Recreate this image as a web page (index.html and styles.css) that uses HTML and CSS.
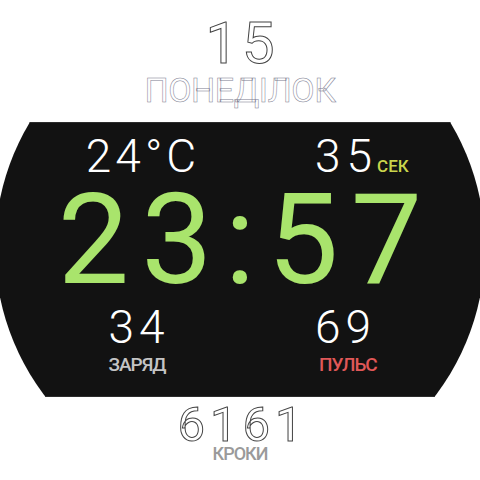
FILE: index.html
```html
<!DOCTYPE html>
<html lang="uk">
<head>
<meta charset="utf-8">
<link rel="stylesheet" href="styles.css">
</head>
<body>
<div class="face">
  <div class="day">15</div>
  <div class="weekday">ПОНЕДІЛОК</div>
  <div class="panel">
    <div class="row row-top">
      <div class="cell left">24°C</div>
      <div class="cell right">35<span class="sec">СЕК</span></div>
    </div>
    <div class="time">23:57</div>
    <div class="row row-bottom">
      <div class="cell left">34</div>
      <div class="cell right">69</div>
    </div>
    <div class="row row-labels">
      <div class="cell left label battery">ЗАРЯД</div>
      <div class="cell right label pulse">ПУЛЬС</div>
    </div>
  </div>
  <div class="steps">6161</div>
  <div class="steps-label">КРОКИ</div>
</div>
</body>
</html>
```

FILE: styles.css
```css
html, body {
  margin: 0;
  padding: 0;
  background: #ffffff;
}

.face {
  width: 480px;
  height: 480px;
  overflow: hidden;
  font-family: Roboto, "Noto Sans", sans-serif;
  display: flex;
  flex-direction: column;
}

.day {
  padding-top: 8px;
  height: 70px;
  line-height: 70px;
  font-size: 58px;
  font-weight: 400;
  text-align: center;
  letter-spacing: 4px;
  padding-left: 4px;
  color: #ffffff;
  -webkit-text-stroke: 1px #444444;
}

.weekday {
  height: 25px;
  line-height: 25px;
  font-size: 34px;
  font-weight: 400;
  text-align: center;
  letter-spacing: -0.5px;
  color: #ffffff;
  -webkit-text-stroke: 0.5px #7c7c90;
}

.panel {
  margin-top: 19px;
  height: 275px;
  background: #121212;
  border-top: 1px solid #2c2c2c;
  border-bottom: 1px solid #2c2c2c;
  box-sizing: border-box;
  clip-path: circle(245px at 240px 126px);
  display: flex;
  flex-direction: column;
  color: #ffffff;
}

.row {
  display: grid;
  grid-template-columns: 206px 1fr;
  padding-left: 36px;
}

.cell {
  font-size: 46px;
  font-weight: 300;
  letter-spacing: 5px;
}

.cell.left {
  text-align: center;
}

.cell.right {
  text-align: left;
  padding-left: 73px;
}

.row-top {
  height: 67px;
  line-height: 67px;
}

.row-top .cell.left {
  letter-spacing: 4px;
  padding-left: 8px;
}

.row-top .cell.right {
  letter-spacing: 6px;
}

.sec {
  font-size: 17px;
  font-weight: 500;
  letter-spacing: 0;
  color: #c9d44c;
  margin-left: -1px;
}

.time {
  height: 99px;
  line-height: 99px;
  font-size: 127px;
  font-weight: 400;
  color: #a9e46c;
  text-align: center;
  letter-spacing: 12px;
  padding-left: 12px;
}

.row-bottom {
  margin-top: 18px;
  height: 40px;
  line-height: 40px;
}

.row-labels {
  height: 35px;
  line-height: 35px;
}

.label {
  font-size: 19px;
  font-weight: 500;
  letter-spacing: -1px;
}

.label.battery {
  color: #c4c4c4;
  padding-right: 4px;
}

.label.pulse {
  color: #e05858;
  padding-left: 77px;
}

.steps {
  margin-top: 8px;
  height: 40px;
  line-height: 40px;
  font-size: 49px;
  font-weight: 400;
  text-align: center;
  letter-spacing: 5px;
  padding-left: 5px;
  color: #ffffff;
  -webkit-text-stroke: 1px #444444;
}

.steps-label {
  height: 17px;
  line-height: 17px;
  font-size: 18px;
  font-weight: 500;
  text-align: center;
  letter-spacing: -1px;
  color: #9a9a9a;
}
```
